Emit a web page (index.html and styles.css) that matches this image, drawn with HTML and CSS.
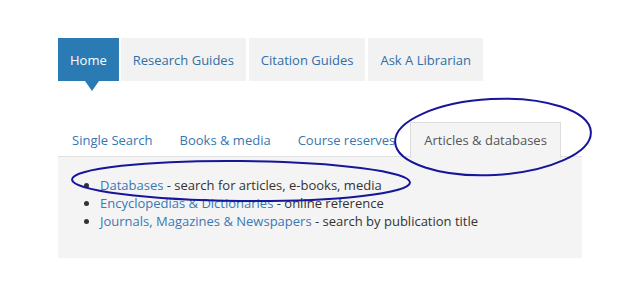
FILE: index.html
```html
<!DOCTYPE html>
<html>
<head>
<meta charset="utf-8">
<link rel="stylesheet" href="styles.css">
</head>
<body>
<div class="page">
  <nav class="topnav">
    <a class="topnav-item active">Home</a>
    <a class="topnav-item">Research Guides</a>
    <a class="topnav-item">Citation Guides</a>
    <a class="topnav-item">Ask A Librarian</a>
  </nav>
  <div class="tabs">
    <a class="tab">Single Search</a>
    <a class="tab">Books &amp; media</a>
    <a class="tab">Course reserves</a>
    <a class="tab active">Articles &amp; databases</a>
  </div>
  <div class="panel">
    <ul class="list">
      <li><a class="link">Databases</a> - search for articles, e-books, media</li>
      <li><a class="link">Encyclopedias &amp; Dictionaries</a> - online reference</li>
      <li><a class="link">Journals, Magazines &amp; Newspapers</a> - search by publication title</li>
    </ul>
  </div>
</div>
<svg class="marks" width="620" height="300" viewBox="0 0 620 300">
  <ellipse cx="493" cy="137" rx="98" ry="38" transform="rotate(-3 493 137)" fill="none" stroke="#16169a" stroke-width="2"/>
  <ellipse cx="241" cy="181" rx="169" ry="20" transform="rotate(0.5 241 181)" fill="none" stroke="#16169a" stroke-width="2"/>
</svg>
</body>
</html>
```
FILE: styles.css
```css
html, body {
  margin: 0;
  padding: 0;
  background: #ffffff;
}
body {
  font-family: "Open Sans", "DejaVu Sans", sans-serif;
  font-size: 13px;
  width: 620px;
  height: 300px;
  position: relative;
  overflow: hidden;
}
.page {
  padding: 38px 0 0 58px;
  width: 524px;
}
.topnav {
  display: flex;
  gap: 3px;
}
.topnav-item {
  display: block;
  height: 43px;
  line-height: 44px;
  padding: 0 12px;
  background: #f2f2f2;
  color: #2f6fa6;
  position: relative;
}
.topnav-item.active {
  background: #2a7ab4;
  color: #ffffff;
  margin-right: -1px;
}
.topnav-item.active::after {
  content: "";
  position: absolute;
  left: 27px;
  top: 43px;
  border-left: 7px solid transparent;
  border-right: 7px solid transparent;
  border-top: 10px solid #2a7ab4;
}
.tabs {
  display: flex;
  margin-top: 41px;
  border-bottom: 1px solid #e2e2e2;
  height: 34px;
}
.tab {
  display: block;
  height: 34px;
  line-height: 34px;
  padding: 0 13px;
  color: #3577b0;
  border: 1px solid transparent;
  border-bottom: none;
  margin-left: -1px;
}
.tab:first-child {
  margin-left: 0;
}
.tab.active {
  background: #f4f4f4;
  border-color: #dddddd;
  color: #555555;
  height: 35px;
  margin-left: 1px;
}
.panel {
  background: #f4f4f4;
  padding: 19px 0 28px 0;
}
.list {
  margin: 0;
  padding: 0 0 0 42px;
  line-height: 18px;
  color: #333333;
}
.link {
  color: #3a78b4;
}
.marks {
  position: absolute;
  left: 0;
  top: 0;
  pointer-events: none;
}
```
